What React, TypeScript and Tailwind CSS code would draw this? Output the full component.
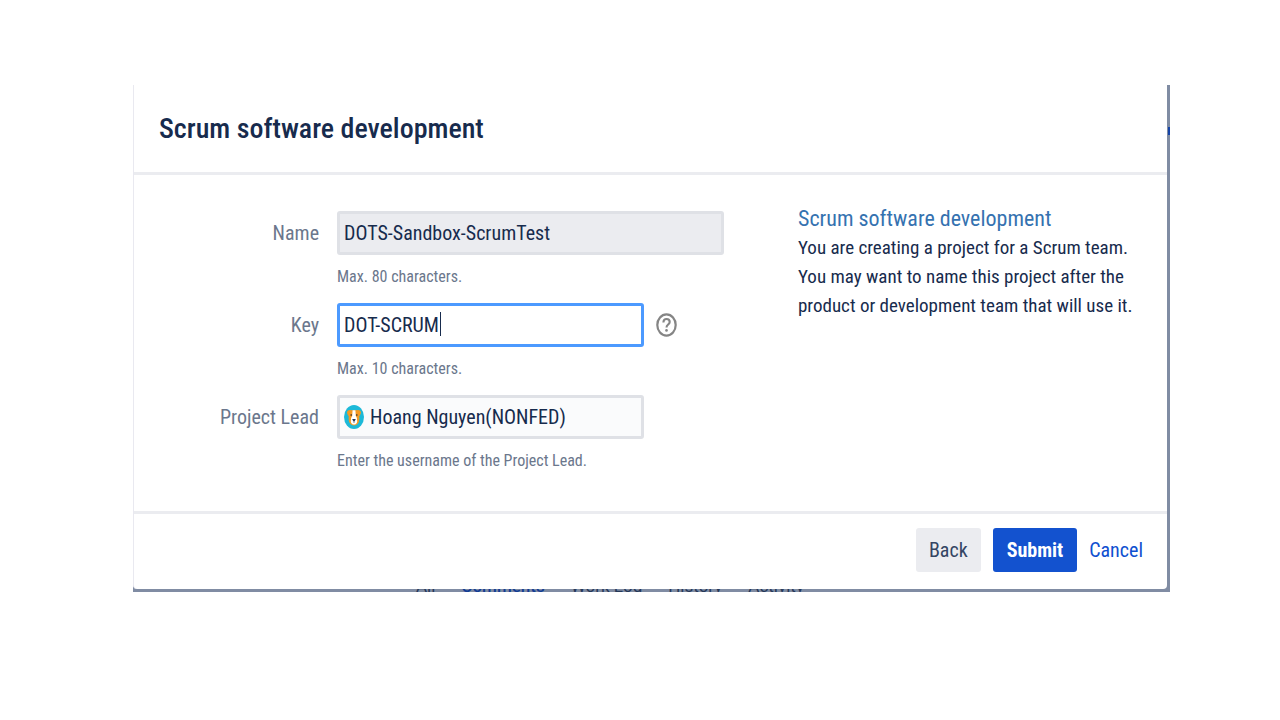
import { useId } from "react";
import type { ReactNode } from "react";

function DogAvatar() {
  return (
    <svg viewBox="0 0 20 24" preserveAspectRatio="none" className="h-6 w-5 shrink-0" aria-hidden="true">
      <ellipse cx="10" cy="12" rx="10" ry="12" fill="#1db9d8" />
      <path d="M3 7 Q3.6 4.4 7.6 5.2 L7.8 12 L4.6 11 Q3 9.6 3 7Z" fill="#f59a23" />
      <path d="M17 7 Q16.4 4.4 12.4 5.2 L12.2 12 L15.4 11 Q17 9.6 17 7Z" fill="#f59a23" />
      <path d="M5 6 Q10 4 15 6 L15.4 14 Q15 20 10 20.6 Q5 20 4.6 14Z" fill="#f59a23" />
      <path d="M8.6 5.2 H11.4 L11.8 11 Q13.8 13 13.2 16.8 Q12.6 19.6 10 19.6 Q7.4 19.6 6.8 16.8 Q6.2 13 8.2 11Z" fill="#fff" />
      <ellipse cx="7.2" cy="10" rx="0.8" ry="1" fill="#5b4632" />
      <ellipse cx="12.8" cy="10" rx="0.8" ry="1" fill="#5b4632" />
      <path d="M8.2 14 H11.8 L10.5 16.6 H9.5Z" fill="#253858" />
      <path d="M10 16.4 V18" stroke="#253858" strokeWidth="0.6" />
    </svg>
  );
}

function HelpIcon() {
  return (
    <svg viewBox="0 0 21 24" className="h-6 w-[21px]" fill="none" stroke="#858585" aria-hidden="true">
      <ellipse cx="10.5" cy="12" rx="9.2" ry="10.6" strokeWidth="2.2" />
      <path d="M7.4 9.4 C7.4 7 8.7 6 10.5 6 C12.4 6 13.7 7.1 13.7 8.9 C13.7 11.4 10.5 11.6 10.5 14.4" strokeWidth="2.1" />
      <ellipse cx="10.5" cy="17.4" rx="1.3" ry="1.4" fill="#858585" stroke="none" />
    </svg>
  );
}

type FieldProps = { label: string; hint: string; children: (id: string) => ReactNode };

function Field({ label, hint, children }: FieldProps) {
  const id = useId();
  return (
    <div className="grid grid-cols-[185px_1fr] gap-x-[18px]">
      <label htmlFor={id} className="flex items-center justify-end text-xl text-[#6b778c]">
        {label}
      </label>
      <div className="flex items-center gap-3">{children(id)}</div>
      <p className="col-start-2 pt-3 text-base leading-5 text-[#6b778c]">{hint}</p>
    </div>
  );
}

const tabs = ["All", "Comments", "Work Log", "History", "Activity"];

export default function App() {
  return (
    <main className="min-h-screen bg-white pt-[85px] pr-[110px] pl-[133px] font-['Roboto_Condensed','Roboto',sans-serif] text-[#172b4d]">
      <div className="relative overflow-hidden bg-[#808ca3] pr-[3px]">
        <section className="rounded-b border-l border-[#e9e9f0] bg-white" aria-labelledby="dialog-title">
          <header className="border-b-3 border-[#ebecf0] px-[25px] pt-6 pb-[23px]">
            <h1 id="dialog-title" className="text-[28px] leading-10 font-medium">
              Scrum software development
            </h1>
          </header>
          <div className="flex justify-between pt-[29px] pr-7 pb-10">
            <form className="flex w-[590px] flex-col gap-4 pt-[7px]">
              <Field label="Name" hint="Max. 80 characters.">
                {(id) => (
                  <input
                    id={id}
                    defaultValue="DOTS-Sandbox-ScrumTest"
                    className="h-11 w-full rounded-[3px] border-3 border-[#dfe1e6] bg-[#ebecf0] px-1 text-xl outline-none"
                  />
                )}
              </Field>
              <Field label="Key" hint="Max. 10 characters.">
                {(id) => (
                  <>
                    <div className="relative w-[307px]">
                      <input
                        id={id}
                        defaultValue="DOT-SCRUM"
                        className="h-11 w-full rounded-[3px] border-3 border-[#4c9aff] bg-white px-1 text-xl outline-none"
                      />
                      <span className="absolute top-[9px] left-[103px] h-6 w-px bg-[#172b4d]" />
                    </div>
                    <button type="button" aria-label="Help">
                      <HelpIcon />
                    </button>
                  </>
                )}
              </Field>
              <Field label="Project Lead" hint="Enter the username of the Project Lead.">
                {(id) => (
                  <div className="flex h-11 w-[307px] items-center gap-[6px] rounded-[3px] border-3 border-[#dfe1e6] bg-[#fafbfc] px-1">
                    <DogAvatar />
                    <input
                      id={id}
                      defaultValue="Hoang Nguyen(NONFED)"
                      className="w-full min-w-0 bg-transparent text-xl outline-none"
                    />
                  </div>
                )}
              </Field>
            </form>
            <aside className="w-[341px]">
              <h2 className="text-[22px] leading-[29px] text-[#3572b0]">Scrum software development</h2>
              <p className="text-[19px] leading-[29px]">
                You are creating a project for a Scrum team. You may want to name this project after the product or
                development team that will use it.
              </p>
            </aside>
          </div>
          <footer className="flex items-center justify-end gap-3 border-t-3 border-[#ebecf0] pt-[14px] pr-6 pb-[17px] text-xl">
            <button type="button" className="h-11 rounded-[3px] bg-[#ebecf0] px-[13px] text-[#344563]">
              Back
            </button>
            <button type="button" className="h-11 rounded-[3px] bg-[#1352cf] px-[14px] font-bold text-white">
              Submit
            </button>
            <a href="#cancel" className="text-[#0f50d0]">
              Cancel
            </a>
          </footer>
        </section>
        <nav className="flex h-[3px] items-end gap-[26px] overflow-hidden pl-[283px] font-['Roboto',sans-serif] text-[17px] leading-[11px] text-[#253858]">
          {tabs.map((tab) => (
            <a key={tab} href="#activity" className={tab === "Comments" ? "font-medium text-[#123d94]" : ""}>
              {tab}
            </a>
          ))}
        </nav>
        <span className="absolute top-[42px] right-0 h-2 w-[2px] bg-[#1444a8]" />
      </div>
    </main>
  );
}
